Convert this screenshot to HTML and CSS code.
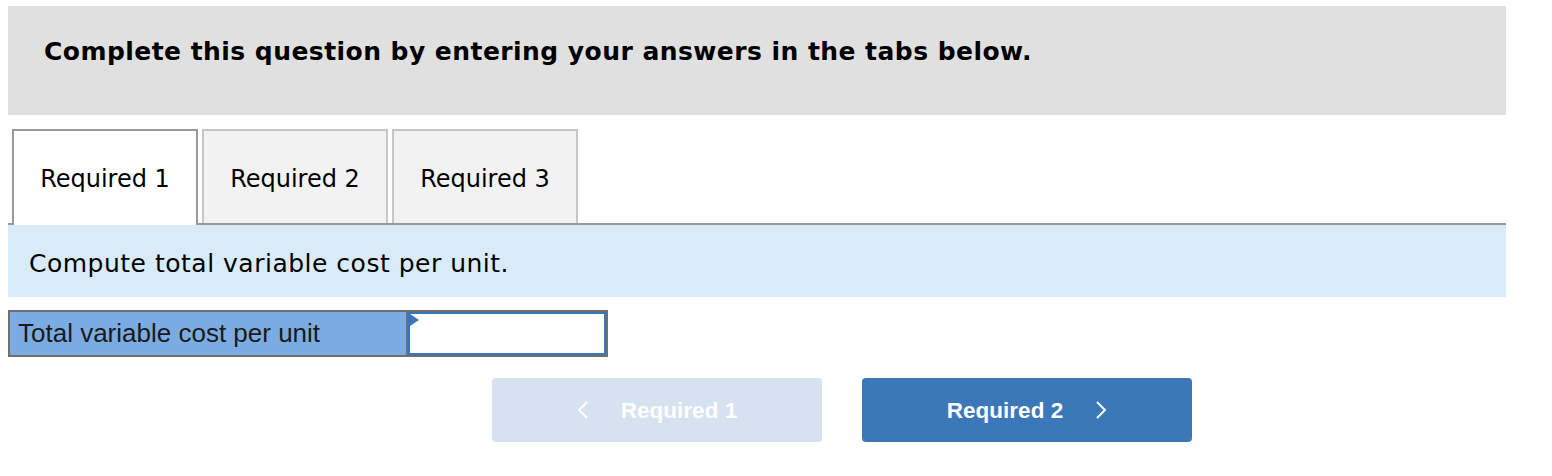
FILE: index.html
```html
<!DOCTYPE html>
<html lang="en">
<head>
    <meta charset="UTF-8">
    <title>Required 1</title>
    <link rel="stylesheet" href="styles.css">
</head>
<body>
    <div class="page">
        <div class="instructions">
            <h2>Complete this question by entering your answers in the tabs below.</h2>
        </div>

        <div class="tabs">
            <div class="tab active">Required 1</div>
            <div class="tab">Required 2</div>
            <div class="tab">Required 3</div>
        </div>

        <div class="prompt">Compute total variable cost per unit.</div>

        <div class="answer-row">
            <div class="answer-label">Total variable cost per unit</div>
            <div class="answer-cell">
                <span class="marker"></span>
                <input type="text" class="answer-input">
            </div>
        </div>

        <div class="nav">
            <button class="nav-btn prev" disabled>
                <svg width="12" height="20" viewBox="0 0 12 20"><path d="M10 2 L2 10 L10 18" fill="none" stroke="#fff" stroke-width="2"/></svg>
                <span>Required 1</span>
            </button>
            <button class="nav-btn next">
                <span>Required 2</span>
                <svg width="12" height="20" viewBox="0 0 12 20"><path d="M2 2 L10 10 L2 18" fill="none" stroke="#fff" stroke-width="2"/></svg>
            </button>
        </div>
    </div>
</body>
</html>
```

FILE: styles.css
```css
body {
    margin: 0;
    background: white;
    font-family: "DejaVu Sans", Verdana, sans-serif;
    color: #000;
}
.page {
    width: 1498px;
    padding: 6px 0 0 8px;
}
.instructions {
    background-color: #e0e0e0;
    height: 109px;
    padding: 0 0 0 36px;
    box-sizing: border-box;
}
.instructions h2 {
    margin: 0;
    padding-top: 31px;
    font-size: 25px;
    letter-spacing: 0.45px;
    font-weight: bold;
    line-height: 30px;
}
.tabs {
    display: flex;
    gap: 4px;
    margin-top: 14px;
    padding-left: 4px;
    border-bottom: 2px solid #999;
    height: 94px;
}
.tab {
    width: 186px;
    height: 94px;
    box-sizing: border-box;
    background-color: #f2f2f2;
    border: 2px solid #c6c6c6;
    border-bottom: none;
    padding-top: 4px;
    display: flex;
    align-items: center;
    justify-content: center;
    font-size: 24px;
}
.tab.active {
    background: white;
    border-color: #999;
    height: 96px;
    padding-bottom: 2px;
    position: relative;
    z-index: 1;
}
.prompt {
    background-color: #d9ebf9;
    height: 72px;
    box-sizing: border-box;
    padding: 4px 0 0 21px;
    display: flex;
    align-items: center;
    font-size: 25px;
    letter-spacing: 0.5px;
}
.answer-row {
    display: flex;
    width: 600px;
    height: 47px;
    margin-top: 13px;
    box-sizing: border-box;
    border: 2px solid #6f6f6f;
    background-color: #6f6f6f;
    gap: 2px;
}
.answer-label {
    width: 396px;
    background-color: #7aace3;
    font-family: "Liberation Sans", Arial, sans-serif;
    font-size: 26px;
    color: #1a1a1a;
    padding-left: 8px;
    box-sizing: border-box;
    display: flex;
    align-items: center;
}
.answer-cell {
    flex: 1;
    position: relative;
    background: white;
}
.answer-input {
    width: 100%;
    height: 100%;
    box-sizing: border-box;
    border: 2px solid #3a76bb;
    margin: 0;
    padding: 0 8px;
    font-size: 20px;
    outline: none;
}
.marker {
    position: absolute;
    top: 2px;
    left: 2px;
    width: 0;
    height: 0;
    border-top: 6px solid transparent;
    border-bottom: 6px solid transparent;
    border-left: 9px solid #3a76bb;
}
.nav {
    display: flex;
    gap: 40px;
    padding-left: 484px;
    margin-top: 21px;
}
.nav-btn {
    width: 330px;
    height: 64px;
    border: none;
    border-radius: 4px;
    color: white;
    font-family: "Liberation Sans", Arial, sans-serif;
    font-weight: bold;
    font-size: 22.5px;
    padding-top: 3px;
    display: flex;
    align-items: center;
    justify-content: center;
    gap: 32px;
}
.nav-btn svg {
    margin-top: -3px;
}
.nav-btn.prev {
    background-color: #d6e2f0;
}
.nav-btn.next {
    background-color: #3b77b9;
}
```
